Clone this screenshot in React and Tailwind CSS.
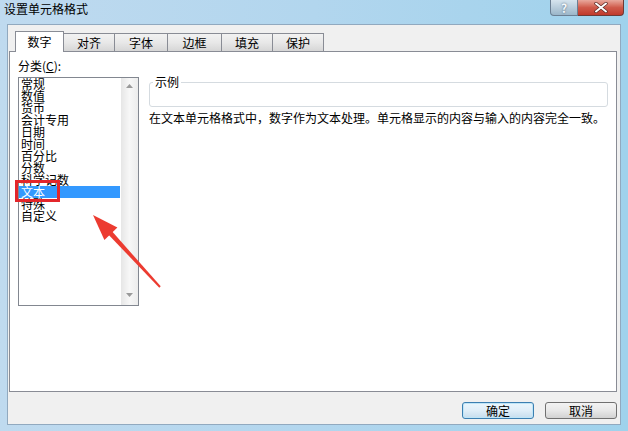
export default function App() {
  const items = ["常规", "数值", "货币", "会计专用", "日期", "时间", "百分比", "分数", "科学记数", "文本", "特殊", "自定义"];
  const tabs = [
    { t: "对齐", w: "w-[52px]" },
    { t: "字体", w: "w-[54px]" },
    { t: "边框", w: "w-[55px]" },
    { t: "填充", w: "w-[52px]" },
    { t: "保护", w: "w-[52px]" },
  ];
  return (
    <div className="relative w-[628px] h-[431px] overflow-hidden flex flex-col bg-linear-to-r from-[#bfdaef] via-[#b2d6ee] to-[#9fd2ec] font-['Noto_Sans_CJK_SC','Noto_Sans',sans-serif] text-[12px] text-black">
      {/* title bar */}
      <div className="h-[24px] flex items-start shrink-0">
        <div className="pl-[4px] pt-[2px] leading-[14px] text-[12px] text-black">设置单元格格式</div>
        <div className="ml-auto mr-[4px] flex">
          <div className="w-[28px] h-[16px] rounded-bl-[4px] border border-t-0 border-[#6b7f93] bg-linear-to-b from-[#d6e4ee] to-[#9bb6c9] flex items-center justify-center text-[12px] leading-none font-bold text-[#f4f8fb] [text-shadow:0_0_2px_#4a5d70]">?</div>
          <div className="w-[46px] h-[16px] rounded-br-[4px] border border-t-0 border-l-0 border-[#6e3a36] bg-linear-to-b from-[#e8a89d] via-[#cf5a4b] to-[#c0392b] flex items-center justify-center">
            <svg width="14" height="11" viewBox="0 0 14 11">
              <path d="M2 1.5 L12 9.5 M12 1.5 L2 9.5" stroke="#5a2a26" strokeWidth="3.4" strokeLinecap="round" />
              <path d="M2 1.5 L12 9.5 M12 1.5 L2 9.5" stroke="#ffffff" strokeWidth="2" strokeLinecap="round" />
            </svg>
          </div>
        </div>
      </div>

      {/* client area */}
      <div className="flex-1 flex px-[7px] pb-[6px]">
        <div className="flex-1 flex flex-col bg-[#f0f0f0] border border-[#91a9bf]">
          {/* tabs */}
          <div className="relative z-10 ml-[7px] mt-[6px] h-[21px] flex items-end">
            <div className="w-[49px] h-[21px] bg-white border border-b-0 border-[#898c95] flex items-start justify-center pt-[3px] leading-[14px]">数字</div>
            {tabs.map((tab) => (
              <div
                key={tab.t}
                className={`${tab.w} h-[18px] mb-px -ml-px border border-b-0 border-[#898c95] bg-linear-to-b from-[#f2f2f2] via-[#e8e8e8] to-[#d6d6d6] flex items-center justify-center leading-[14px]`}
              >
                {tab.t}
              </div>
            ))}
          </div>

          {/* tab panel */}
          <div className="-mt-px ml-[1px] w-[608px] h-[341px] bg-white border border-[#898c95] flex pl-[8px] pt-[6px]">
            {/* left column */}
            <div className="w-[121px] flex flex-col">
              <div className="leading-[14px] pt-[1px]">
                分类(<span className="underline">C</span>):
              </div>
              <div className="mt-[4px] h-[229px] w-[121px] border border-[#828790] bg-white flex">
                <div className="flex-1 flex flex-col pr-[1px]">
                  {items.map((it) => (
                    <div
                      key={it}
                      className={`h-[12px] leading-[12px] pl-[2px] whitespace-nowrap ${it === "文本" ? "bg-[#3399ff] text-white" : ""}`}
                    >
                      {it}
                    </div>
                  ))}
                </div>
                <div className="w-[17px] bg-linear-to-r from-[#e6e6e6] via-[#f7f7f7] to-[#ececec] flex flex-col items-center justify-between pt-[6px] pb-[8px]">
                  <svg width="7" height="4" viewBox="0 0 7 4">
                    <path d="M0 4 L3.5 0 L7 4 Z" fill="#9a9a9a" />
                  </svg>
                  <svg width="7" height="4" viewBox="0 0 7 4">
                    <path d="M0 0 L7 0 L3.5 4 Z" fill="#9a9a9a" />
                  </svg>
                </div>
              </div>
            </div>

            {/* right column */}
            <div className="ml-[10px] mt-[17px] w-[459px] flex flex-col">
              <fieldset className="h-[32px] border border-[#d5dbe0] rounded-[3px] px-[3px]">
                <legend className="px-[2px] leading-[14px]">示例</legend>
              </fieldset>
              <div className="mt-[4px] leading-[14px] whitespace-nowrap">
                在文本单元格格式中，数字作为文本处理。单元格显示的内容与输入的内容完全一致。
              </div>
            </div>
          </div>

          {/* buttons */}
          <div className="mt-[10px] flex justify-end gap-[11px] pr-[3px]">
            <button className="w-[72px] h-[17px] rounded-[3px] border border-[#3c7fb1] bg-linear-to-b from-[#eaf6fd] via-[#e0eef8] to-[#c6dded] shadow-[inset_0_0_0_1px_#bfe5f7] flex items-center justify-center leading-none text-[12px]">确定</button>
            <button className="w-[72px] h-[17px] rounded-[3px] border border-[#707070] bg-linear-to-b from-[#f3f3f3] via-[#e8e8e8] to-[#d2d2d2] flex items-center justify-center leading-none text-[12px]">取消</button>
          </div>
        </div>
      </div>

      {/* annotation: red box */}
      <div className="absolute left-[15px] top-[180px] w-[45px] h-[22px] border-[3px] border-[#e3262b] pointer-events-none" />
      {/* annotation: red arrow */}
      <svg className="absolute left-0 top-0 pointer-events-none" width="628" height="431" viewBox="0 0 628 431">
        <polygon points="93,215 117.4,227.5 104.4,239.9" fill="#ec3b30" />
        <polygon points="110,229.1 160.7,286.3 159.3,287.7 106.4,232.5" fill="#ec3b30" />
      </svg>
    </div>
  );
}
